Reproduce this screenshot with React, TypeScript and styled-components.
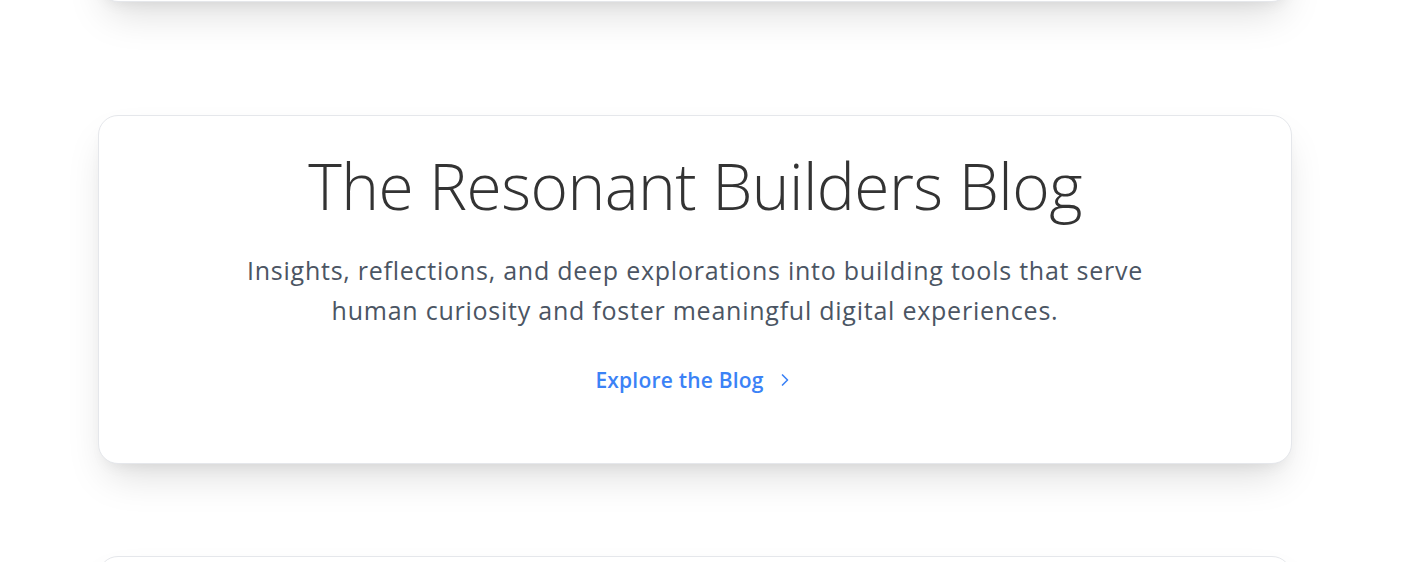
import styled, { createGlobalStyle } from 'styled-components';
import { ChevronRight } from 'lucide-react';

const GlobalStyle = createGlobalStyle`
  html, body {
    margin: 0;
    padding: 0;
    background: #ffffff;
    overflow: hidden;
  }
  body {
    font-family: 'Open Sans', 'Noto Sans', Arial, sans-serif;
  }
`;

const Page = styled.main`
  display: flex;
  flex-direction: column;
  padding-left: 98px;
  width: 1194px;
`;

const Card = styled.section<{ $gap?: number }>`
  box-sizing: border-box;
  width: 100%;
  background: #ffffff;
  border: 1px solid #e5e7eb;
  border-radius: 20px;
  box-shadow: 0 20px 40px -10px rgba(0, 0, 0, 0.15),
    0 8px 16px -8px rgba(0, 0, 0, 0.08);
  margin-top: ${p => p.$gap ?? 0}px;
`;

const PrevCard = styled(Card)`
  height: 200px;
  margin-top: -198px;
`;

const NextCard = styled(Card)`
  height: 200px;
`;

const Hero = styled(Card)`
  display: flex;
  flex-direction: column;
  align-items: center;
  text-align: center;
  height: 349px;
  padding: 32px 48px 0;
`;

const Title = styled.h1`
  margin: 0;
  font-family: 'Open Sans', sans-serif;
  font-weight: 300;
  font-size: 64px;
  line-height: 76px;
  color: #333333;
  letter-spacing: -0.55px;
`;

const Lead = styled.p`
  margin: 26px 0 0;
  max-width: 920px;
  font-size: 25px;
  letter-spacing: 0.76px;
  line-height: 40px;
  color: #4b5563;
`;

const BlogLink = styled.a`
  display: inline-flex;
  align-items: center;
  gap: 11px;
  margin-top: 36px;
  font-size: 21px;
  letter-spacing: 0.2px;
  line-height: 28px;
  font-weight: 600;
  color: #3b82f6;
  text-decoration: none;
  cursor: pointer;
`;

const App = () => (
  <>
    <GlobalStyle />
    <Page>
      <PrevCard />
      <Hero $gap={113}>
        <Title>The Resonant Builders Blog</Title>
        <Lead>
          Insights, reflections, and deep explorations into building tools that
          serve human curiosity and foster meaningful digital experiences.
        </Lead>
        <BlogLink href="#">
          Explore the Blog
          <ChevronRight size={20} strokeWidth={2} />
        </BlogLink>
      </Hero>
      <NextCard $gap={92} />
    </Page>
  </>
);

export default App;
